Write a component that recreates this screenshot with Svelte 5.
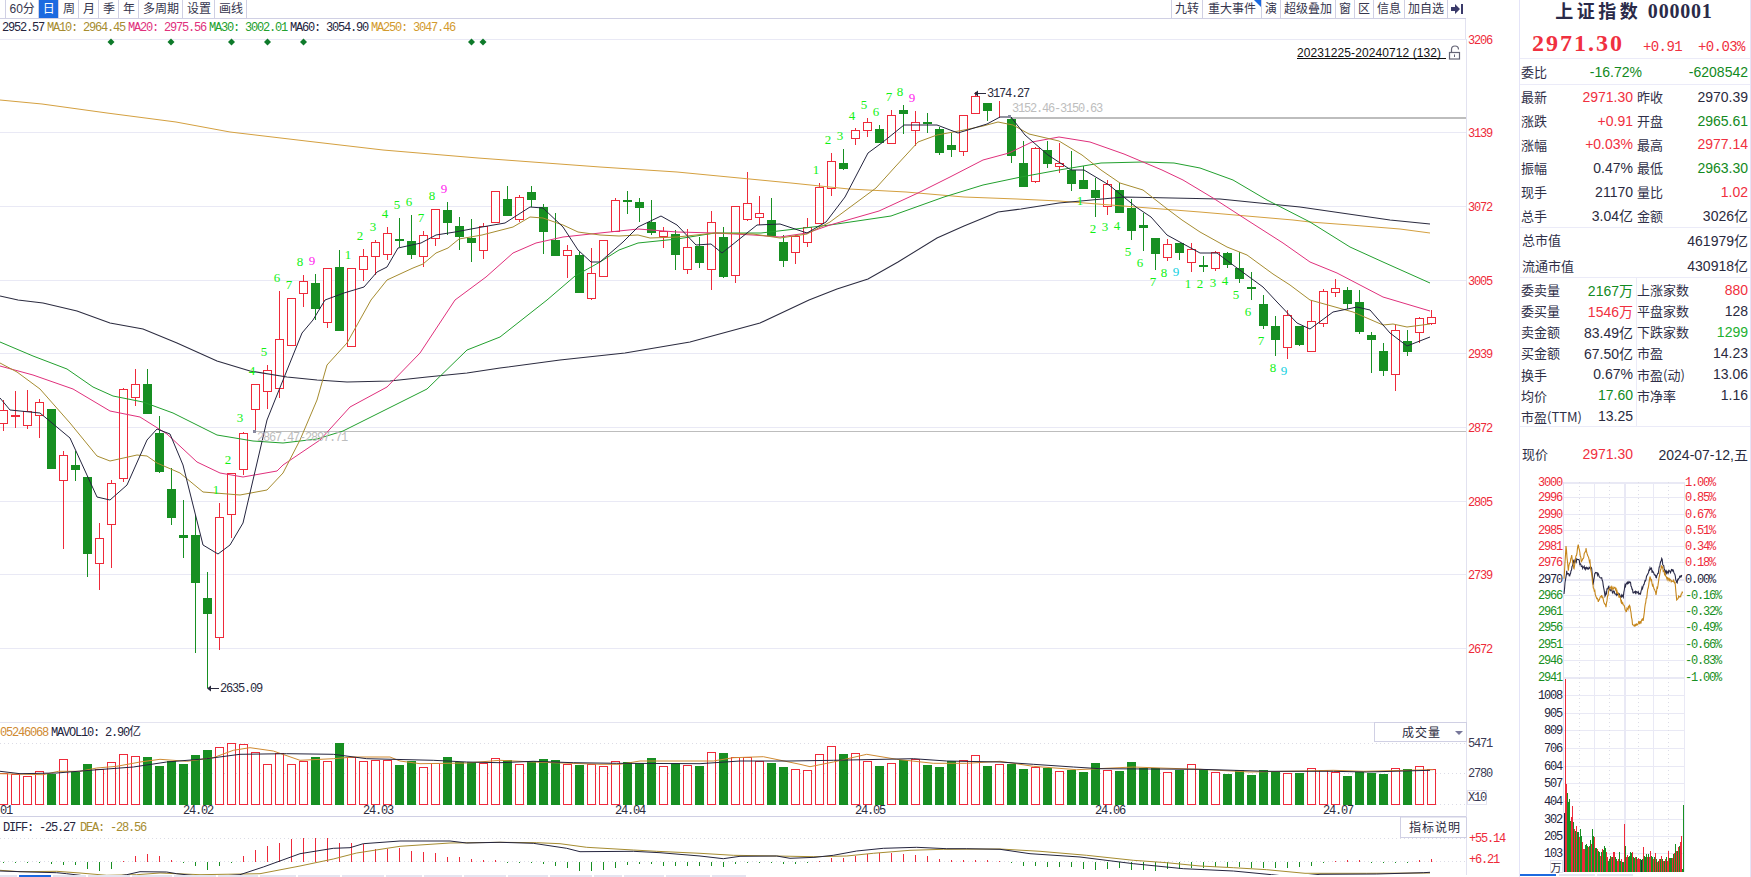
<script>
  const RED = '#ee2a3a', GREEN = '#178f22';
  const candles = [
    ['r',400,410,423,431],['r',391,415,416,428],['r',390,411,425,429],['r',399,402,415,438],['g',409,409,469,469],
    ['r',451,455,480,549],['g',451,465,470,481],['g',476,477,554,577],['r',523,538,563,590],['r',480,483,524,568],
    ['r',388,389,478,482],['r',369,384,397,406],['g',369,384,414,414],['g',416,433,472,473],['g',468,489,518,525],
    ['g',500,535,538,558],['g',515,535,583,653],['g',572,598,614,688],['r',503,517,637,650],['r',473,473,514,538],
    ['r',432,433,469,475],['r',384,384,409,431],['r',365,370,391,409],['r',291,339,388,398],['r',298,298,345,345],
    ['r',275,281,293,307],['g',274,283,309,320],['r',268,268,322,328],['g',250,267,331,331],['r',268,268,346,346],
    ['r',249,256,269,281],['r',240,242,256,275],['r',227,233,254,260],['g',218,239,241,247],['g',215,241,255,259],
    ['r',231,235,256,267],['r',209,209,238,246],['g',202,210,223,235],['g',217,226,237,250],['g',219,238,243,262],
    ['r',223,226,250,259],['r',191,191,222,223],['g',186,199,216,216],['r',195,197,219,222],['g',186,192,200,207],
    ['g',204,207,232,254],['g',213,240,256,256],['r',245,250,255,278],['g',252,255,293,293],['r',248,273,298,300],
    ['r',240,240,276,276],['r',198,200,231,231],['g',191,200,202,214],['g',198,202,208,222],['g',200,222,233,235],
    ['r',227,231,236,248],['g',230,234,255,270],['r',229,247,269,274],['g',237,246,263,268],['r',211,222,269,290],
    ['g',227,237,277,278],['r',206,206,275,283],['r',172,203,219,221],['r',196,213,217,225],['g',198,220,236,236],
    ['g',235,242,261,267],['r',235,236,252,264],['r',218,227,242,247],['r',183,187,223,223],['r',153,161,188,196],
    ['g',149,163,169,170],['r',128,130,138,145],['r',118,122,130,137],['g',125,129,143,143],['r',110,115,143,143],
    ['g',105,110,114,134],['r',111,122,130,146],['g',113,122,124,133],['g',127,129,153,155],['g',133,145,150,157],
    ['r',115,115,151,156],['r',92,96,113,113],['g',103,103,111,121],['r',101,111,111,118],['g',117,119,156,163],
    ['g',141,163,187,187],['r',147,148,181,183],['g',141,150,164,168],['r',143,163,166,173],['g',151,170,184,191],
    ['g',166,180,189,189],['g',178,190,198,217],['r',180,184,206,215],['g',183,190,213,213],['g',199,208,231,240],
    ['g',213,225,228,251],['g',238,238,254,270],['r',239,244,257,261],['g',243,243,253,260],['r',243,249,262,272],
    ['g',256,265,267,272],['r',251,252,268,271],['g',252,253,265,268],['g',252,268,279,283],['g',272,287,288,300],
    ['g',295,304,326,329],['g',316,326,340,356],['r',310,315,347,359],['g',326,326,345,346],['r',300,321,351,351],
    ['r',289,291,323,327],['r',279,288,292,297],['g',287,290,304,309],['g',290,302,332,334],['g',332,335,340,373],
    ['g',343,351,371,376],['r',325,330,374,391],['g',330,341,352,356],['r',317,318,332,343],['r',310,317,323,325]
  ].map((c, i) => ({ x: 3 + 12 * i, color: c[0], hi: c[1], top: c[2], bot: c[3], lo: c[4] }));

  const pts = (a) => a.map((p) => p.join(',')).join(' ');
  const conv = (ox, base, a, sx = 3) => a.map(([x, y]) => [+(ox + x / sx).toFixed(1), +(base + y / 3).toFixed(1)]);

  const ma250 = [[0,100],[42,104],[107,113],[176,122],[230,132],[306,141],[383,150],[478,158],[600,167],[677,172],[791,183],[849,189],[906,192],[964,197],[1017,199],[1059,201],[1136,207],[1200,212],[1293,220],[1310,222],[1350,225],[1400,229],[1430,233]];
  const ma60 = [[0,296],[18,300],[43,303],[77,311],[110,323],[143,329],[177,343],[217,361],[250,371],[287,377],[317,380],[347,382],[390,381],[427,377],[467,373],[500,368],[560,360],[625,353],[690,342],[760,323],[809,300],[837,289],[868,279],[898,262],[937,238],[964,226],[998,212],[1021,209],[1059,203],[1124,197],[1220,199],[1300,207],[1390,220],[1430,224]];
  const ma30 = [[0,342],[33,356],[67,369],[93,387],[113,396],[143,402],[173,413],[197,425],[217,435],[253,441],[283,443],[317,439],[343,431],[393,406],[427,389],[467,350],[500,337],[547,300],[575,276],[600,262],[619,250],[638,243],[677,239],[715,233],[761,233],[830,225],[891,216],[944,197],[983,185],[1021,177],[1059,170],[1101,163],[1143,162],[1174,163],[1200,168],[1233,180],[1267,200],[1310,222],[1350,247],[1383,262],[1430,283]];
  const ma20 = [[0,366],[33,375],[73,389],[110,411],[140,417],[167,434],[197,462],[220,473],[243,477],[277,471],[283,465],[320,440],[350,407],[387,387],[420,353],[455,300],[486,277],[513,253],[536,243],[563,237],[600,233],[638,229],[677,232],[715,233],[753,235],[780,237],[807,233],[830,225],[879,211],[918,193],[950,177],[983,160],[1009,153],[1032,142],[1059,137],[1090,142],[1124,154],[1162,170],[1183,180],[1213,198],[1247,220],[1283,243],[1310,262],[1337,273],[1383,297],[1430,311]];
  const ma10 = [[0,363],[17,372],[40,389],[70,423],[97,456],[110,461],[137,455],[147,456],[157,463],[180,473],[203,492],[240,495],[267,490],[283,473],[300,440],[317,400],[327,365],[347,343],[371,300],[387,280],[413,268],[423,264],[436,253],[448,248],[459,239],[482,235],[513,227],[530,217],[543,218],[563,225],[578,232],[600,235],[619,236],[638,235],[650,238],[677,237],[715,233],[753,234],[780,238],[807,234],[830,222],[876,188],[895,167],[918,142],[937,135],[964,130],[983,126],[998,122],[1013,125],[1029,134],[1059,141],[1082,155],[1101,170],[1120,183],[1143,190],[1166,208],[1182,220],[1200,232],[1227,247],[1247,255],[1273,274],[1290,285],[1310,300],[1353,312],[1383,325],[1393,324],[1407,327],[1430,324]];
  const ma5 = [[0,398],[10,410],[40,413],[70,438],[97,497],[110,500],[127,485],[147,440],[157,429],[170,434],[183,465],[203,545],[218,554],[230,545],[243,523],[267,420],[277,395],[302,333],[313,320],[325,300],[344,293],[364,287],[377,272],[387,267],[398,248],[421,243],[436,235],[455,232],[482,227],[505,223],[530,207],[543,208],[563,227],[578,250],[591,262],[600,262],[623,242],[638,227],[661,216],[677,225],[696,245],[711,244],[722,253],[757,225],[780,224],[807,233],[826,222],[845,197],[868,153],[883,142],[904,125],[937,125],[958,133],[987,124],[1000,117],[1011,117],[1025,135],[1048,155],[1071,170],[1084,170],[1109,185],[1136,207],[1151,217],[1167,235],[1200,253],[1217,253],[1237,268],[1263,287],[1277,302],[1297,323],[1310,329],[1333,312],[1357,307],[1370,310],[1390,333],[1407,346],[1430,337]];
  const maLines = [
    { d: ma250, c: '#d4a040', w: 1 }, { d: ma60, c: '#2c2c40', w: 1.05 }, { d: ma30, c: '#22a02e', w: 1 },
    { d: ma20, c: '#e0307c', w: 1 }, { d: ma10, c: '#a68c30', w: 1 }, { d: ma5, c: '#24243e', w: 1 }
  ];

  const grid = [39, 132, 206, 280, 353, 427, 501, 574, 648];
  const axis = ['3206', '3139', '3072', '3005', '2939', '2872', '2805', '2739', '2672'];
  const diamonds = [111, 171, 231.5, 267.5, 303.5, 471.5, 483];
  const seqM = '#ff22ee', seqC = '#10d0e0', seqG = '#10f014';
  const seq = [
    [216,490,'1'],[228,460,'2'],[240,418,'3'],[252,371,'4'],[264,352,'5'],[277,278,'6'],[289,285,'7'],[300,262,'8'],[312,261,'9',seqM],
    [348,255,'1'],[360,236,'2'],[373,227,'3'],[385,214,'4'],[397,205,'5'],[409,202,'6'],[421,218,'7'],[432,196,'8'],[444,189,'9',seqM],
    [816,170,'1'],[828,140,'2'],[840,136,'3'],[852,116,'4'],[864,105,'5'],[876,112,'6'],[889,97,'7'],[900,92,'8'],[912,98,'9',seqM],
    [1080,201,'1'],[1093,229,'2'],[1105,227,'3'],[1117,226,'4'],[1128,252,'5'],[1140,263,'6'],[1153,282,'7'],[1164,273,'8'],[1176,272,'9',seqC],
    [1188,284,'1'],[1200,284,'2'],[1213,283,'3'],[1225,281,'4'],[1236,295,'5'],[1248,312,'6'],[1261,341,'7'],[1273,368,'8'],[1284,371,'9',seqC]
  ];

  const volZ = [168,172,177,163,172,127,165,141,155,136,112,118,120,147,132,141,114,99,91,79,82,106,142,108,142,132,120,132,78,120,132,129,129,144,132,151,139,120,135,135,138,124];
  const volY = [760,764,761,759,760,764,765,764,766,761,762,763,758,766,763,765,766,752,753,757,757,761,763,767,769,770,754,746,754,753,761,766,763,760,759,765,767,761,760,755,766,764,764,769,767,768,771,770,772,763,770,771,762,768,768,772,770,764,769,772,774,770,775,770,772,773,773,768,770,772,776,772,773,774,768,769,766,769];
  const vols = [...volZ.map((z) => Math.round(717 + z / 3)), ...volY];
  const volBars = candles.map((c, i) => ({ x: c.x, color: c.color, top: vols[i] }));
  const volOrange = [
    ...conv(0, 717, [[0,170],[130,173],[175,163],[240,163],[290,153],[350,148],[420,135],[480,127],[560,133],[640,122],[700,100],[750,92],[820,102],[900,130],[1000,125],[1060,120],[1170,120],[1200,132],[1260,140],[1400,138]]),
    ...conv(500, 716, [[0,133],[100,138],[300,145],[360,145],[420,135],[640,135],[700,125],[790,122],[900,145],[930,152],[1000,138],[1100,115],[1190,130],[1300,142],[1400,142]]),
    ...conv(1000, 717, [[0,133],[100,148],[230,158],[400,150],[480,153],[600,157],[750,165],[1000,160],[1090,163],[1300,158]])
  ];
  const volDark = [
    ...conv(0, 717, [[0,163],[60,170],[170,168],[270,160],[400,150],[500,135],[620,125],[720,112],[860,110],[1000,112],[1100,125],[1300,130],[1400,135]]),
    ...conv(500, 716, [[0,140],[100,136],[220,140],[350,142],[600,143],[720,135],[870,135],[1000,133],[1240,128],[1340,135]]),
    ...conv(1000, 717, [[0,135],[100,142],[220,150],[300,155],[600,157],[800,163],[1000,163],[1100,165],[1290,160]])
  ];
  const dates = [[0,'01'],[183,'24.02'],[363,'24.03'],[615,'24.04'],[855,'24.05'],[1095,'24.06'],[1323,'24.07']];

  const hist = [-1,-1,-1,-1,-2,-3,-3,-7,-9,-7,1,6,8,6,2,-1,-4,-8,-4,-1,6,12,16,19,23,24,24,24,19,19,18,13,13,14,11,10,9,5,5,3,2,2,-1,-1,-1,-2,-4,-6,-9,-9,-8,-6,-3,-2,-2,-4,-4,-4,-4,-4,-5,-2,-1,-1,-1,-2,-2,-1,1,4,4,6,8,9,9,8,7,6,3,2,2,2,2,1,-1,-4,-4,-5,-5,-5,-7,-8,-7,-6,-8,-8,-9,-7,-7,-6,-6,-5,-5,-5,-6,-6,-6,-6,-5,-4,-1,1,2,2,-1,-1,-1,-1,2,3];
  const diff = [
    ...conv(0, 717, [[0,462],[90,465],[170,467],[200,470],[240,475],[300,485],[380,473],[420,464],[500,465],[530,470],[620,480],[720,473],[790,450],[900,410],[1000,394],[1050,392],[1090,380],[1200,372],[1350,372],[1400,378]]),
    ...conv(500, 716, [[0,379],[100,382],[200,397],[240,407],[400,406],[480,410],[600,420],[670,428],[720,421],[830,420],[870,427],[945,424],[1000,418],[1070,405],[1150,397],[1250,394],[1340,398],[1400,398]]),
    ...conv(1000, 717, [[0,397],[90,410],[240,420],[400,440],[550,455],[700,462],[815,473],[880,480],[960,472],[1130,471],[1270,467],[1290,466]])
  ];
  const dea = [
    ...conv(0, 717, [[0,460],[60,464],[170,463],[240,468],[320,475],[410,473],[480,468],[600,473],[780,470],[900,447],[1000,426],[1070,408],[1200,388],[1350,378]]),
    ...conv(500, 716, [[0,379],[110,380],[180,383],[260,394],[400,402],[470,406],[600,412],[700,418],[830,420],[940,422],[1040,420],[1120,412],[1230,403],[1330,400]]),
    ...conv(1000, 717, [[0,396],[120,403],[260,415],[400,430],[500,437],[600,447],[700,452],[800,458],[915,469],[1100,469],[1290,468]])
  ];
  const tabs = [[0,17,0],[19,51,1],[53,86,0],[88,130,0],[132,172,0],[174,216,0],[218,258,0],[260,296,0],[298,340,0],[342,384,0],[386,422,0],[424,462,0],[464,506,0],[508,548,0],[550,592,0],[594,622,0],[624,664,0],[666,710,0],[712,746,0]];

  // mini chart
  function jag(raw, seed) {
    const p = conv(1500, 470, raw);
    let s = seed, out = [];
    for (let k = 0; k < p.length - 1; k++) {
      const [x0, y0] = p[k], [x1, y1] = p[k + 1];
      for (let x = x0; x < x1; x += 0.5) {
        s = (s * 9301 + 49297) % 233280;
        const n = (s / 233280 - 0.5) * 3.4;
        out.push([+x.toFixed(1), +(y0 + (y1 - y0) * (x - x0) / (x1 - x0) + n).toFixed(1)]);
      }
    }
    out.push(p[p.length - 1]);
    return pts(out);
  }
  const miniDark = jag([[192,375],[195,345],[200,310],[210,320],[220,280],[235,270],[245,295],[275,300],[280,345],[285,310],[305,325],[315,380],[325,355],[340,370],[370,385],[375,350],[390,340],[400,370],[420,375],[435,335],[450,295],[470,325],[485,270],[495,310],[520,305],[530,340],[545,318]], 7);
  const miniOrange = jag([[192,330],[198,235],[205,300],[215,260],[222,300],[235,225],[245,280],[258,240],[270,280],[280,355],[295,400],[305,380],[318,410],[327,360],[345,355],[365,400],[378,425],[390,410],[398,470],[420,460],[430,450],[437,400],[450,325],[468,375],[485,290],[500,330],[525,340],[530,390],[548,372]], 31);
  const priceRows = [
    [483,'3000','1.00%','r',1],[498,'2996','0.85%','r'],[515,'2990','0.67%','r'],[531,'2985','0.51%','r'],[547,'2981','0.34%','r'],[563,'2976','0.18%','r'],
    [580,'2970','0.00%','d',1],[596,'2966','-0.16%','g'],[612,'2961','-0.32%','g'],[628,'2956','-0.49%','g'],[645,'2951','-0.66%','g'],[661,'2946','-0.83%','g'],[678,'2941','-1.00%','g',1]
  ];
  const miniVolRows = [[696,'1008'],[714,'905'],[731,'809'],[749,'706'],[767,'604'],[784,'507'],[802,'404'],[820,'302'],[837,'205'],[854,'103']];
  const mv = 'd402 r0 r315 g342 g370 g360 g425 r415 r380 g430 r450 g455 r442 g458 g458 r475 g450 g470 r490 r510 r510 g498 g495 g500 r505 g500 g483 r495 g450 g470 r473 g507 g507 r510 g515 g520 r530 g520 r510 g513 g500 g507 r520 r533 g545 g540 g530 r535 g535 r520 r520 g535 g540 r545 r540 g520 g545 r540 g548 g548 r435 g500 r533 r527 g533 g530 g520 g522 r520 g535 g538 r535 g533 r540 r537 r540 g540 d542 g540 r505 g530 g535 g525 r535 g525 r535 r515 g530 g535 r540 g535 r523 g540 r550 g545 r540 g540 r530 g540 r545 g545 r540 g535 r545 r515 g537 g537 g537 r537 g525 r522 g495 r515 g515 r505 g500 r490 r470 g570 g378'
    .split(' ').map((t, i) => ({ x: 1564 + i, c: t[0], top: 680 + (+t.slice(1)) / 3 }));
  const mvColor = { r: '#ee2a3a', g: '#178f22', d: '#24243e' };

  const left = [['60分'], ['日', 'on'], ['周'], ['月'], ['季'], ['年'], ['多周期'], ['设置'], ['画线']];
  const right = [['九转'], ['重大事件', 'flag'], ['演'], ['超级叠加'], ['窗'], ['区'], ['信息'], ['加自选']];
  const quote = [
    ['最新','2971.30','up','昨收','2970.39',''],['涨跌','+0.91','up','开盘','2965.61','dn'],['涨幅','+0.03%','up','最高','2977.14','up'],
    ['振幅','0.47%','','最低','2963.30','dn'],['现手','21170','','量比','1.02','up'],['总手','3.04亿','','金额','3026亿','']
  ];
  const stats = [
    ['委卖量','2167万','dn','上涨家数','880','up'],['委买量','1546万','up','平盘家数','128',''],['卖金额','83.49亿','','下跌家数','1299','lt'],
    ['买金额','67.50亿','','市盈','14.23',''],['换手','0.67%','','市盈(动)','13.06',''],['均价','17.60','dn','市净率','1.16',''],['市盈(TTM)','13.25','','','','']
  ];
</script>

<div class="root">
  <div class="main">
    <div class="toolbar">
      <span class="stub"></span>
      {#each left as [t, cls]}<span class="btn {cls ?? ''}">{t}</span>{/each}
      <span class="grow"></span>
      <span class="rgroup">
        {#each right as [t, cls]}<span class="btn {cls ?? ''}">{t}</span>{/each}
        <span class="btn arrow"><svg width="12" height="10" viewBox="0 0 12 10"><path d="M0 3h4V0l5 5-5 5V7H0z" fill="#3a3a6a"/><rect x="10" y="0" width="2" height="10" fill="#3a3a6a"/></svg></span>
      </span>
    </div>
    <div class="ma-row">
      <span class="c-dark">2952.57</span>
      <span class="c-tan">MA10: 2964.45</span>
      <span class="c-pink">MA20: 2975.56</span>
      <span class="c-grn">MA30: 3002.01</span>
      <span class="c-dark">MA60: 3054.90</span>
      <span class="c-org">MA250: 3047.46</span>
    </div>

    <svg class="chart" width="1519" height="683" viewBox="0 39 1519 683">
      <g shape-rendering="crispEdges">
        {#each grid as y}<line x1="0" x2="1466" y1={y + 0.5} y2={y + 0.5} stroke="#e9e9f5" />{/each}
        <line x1="1466.5" x2="1466.5" y1="39" y2="722" stroke="#e2e2f0" />
        <line x1="1010" x2="1466" y1="118" y2="118" stroke="#bdbdbd" stroke-width="2" />
        <line x1="254" x2="1466" y1="431.5" y2="431.5" stroke="#bdbdbd" />
      </g>
      {#each diamonds as x}<polygon points="{x},38.5 {x + 3.5},42 {x},45.5 {x - 3.5},42" fill="#0e7a2a" />{/each}

      <g shape-rendering="crispEdges">
        {#each candles as c}
          <line x1={c.x + 0.5} x2={c.x + 0.5} y1={c.hi} y2={c.lo} stroke={c.color === 'r' ? RED : GREEN} />
          {#if c.color === 'g'}
            <rect x={c.x - 4} y={c.top} width="9" height={Math.max(c.bot - c.top, 2)} fill={GREEN} />
          {:else}
            <rect x={c.x - 3.5} y={c.top + 0.5} width="8" height={Math.max(c.bot - c.top, 0)} fill="#fff" stroke={RED} />
          {/if}
        {/each}
      </g>
      {#each maLines as l}<polyline points={pts(l.d)} fill="none" stroke={l.c} stroke-width={l.w} />{/each}

      {#each seq as s}<text class="td" x={s[0]} y={s[1] + 4} fill={s[3] ?? seqG}>{s[2]}</text>{/each}

      <text class="mono" x="987" y="97" fill="#2a2a3e">3174.27</text>
      <line x1="978" x2="986" y1="93.5" y2="93.5" stroke="#2a2a3e" />
      <polygon points="974,93.5 978,90.5 978,96.5" fill="#2a2a3e" />
      <text class="mono" x="1012" y="112" fill="#bdbdbd">3152.46-3150.63</text>
      <rect x="1008" y="115" width="3" height="3" fill="#8a8aa0" />
      <text class="mono" x="257" y="441" fill="#bdbdbd">2867.47-2897.71</text>
      <rect x="253" y="430" width="3" height="3" fill="#8a8aa0" />
      <text class="mono" x="220" y="692" fill="#2a2a3e">2635.09</text>
      <line x1="211" x2="219" y1="688.5" y2="688.5" stroke="#2a2a3e" />
      <polygon points="207,688.5 211,685.5 211,691.5" fill="#2a2a3e" />

      <text class="range" x="1297" y="57">20231225-20240712 (132)</text>
      <line x1="1297" x2="1446" y1="58.5" y2="58.5" stroke="#111" />
      <path d="M1451.5 52v-2.5a3.5 3.5 0 0 1 7 0" fill="none" stroke="#667" stroke-width="1.2" />
      <rect x="1449.5" y="52.5" width="10" height="6.5" fill="none" stroke="#667" stroke-width="1.2" />
      <rect x="1454" y="54.5" width="1" height="2.5" fill="#667" />

      {#each axis as a, i}<text class="mono" x="1468" y={grid[i] + 4.5} fill={RED}>{a}</text>{/each}
    </svg>

    <svg class="chart" width="1519" height="95" viewBox="0 722 1519 95">
      <g shape-rendering="crispEdges">
        <line x1="0" x2="1466" y1="722.5" y2="722.5" stroke="#e4e4f0" />
        <line x1="1466.5" x2="1466.5" y1="722" y2="817" stroke="#e2e2f0" />
        <line class="dots" x1="0" x2="1466" y1="743.5" y2="743.5" />
        <line class="dots" x1="0" x2="1466" y1="773.5" y2="773.5" />
        <line class="dots" x1="0" x2="1466" y1="804.5" y2="804.5" />
        <line x1="0" x2="1466" y1="816.5" y2="816.5" stroke="#d0d0e4" />
        {#each volBars as v}
          {#if v.color === 'g'}
            <rect x={v.x - 4} y={v.top} width="9" height={804.5 - v.top} fill={GREEN} />
          {:else}
            <rect x={v.x - 3.5} y={v.top + 0.5} width="8" height={804 - v.top} fill="#fff" stroke={RED} />
          {/if}
        {/each}
      </g>
      <polyline points={pts(volOrange)} fill="none" stroke="#cf8a32" stroke-width="1" />
      <polyline points={pts(volDark)} fill="none" stroke="#24243e" stroke-width="1" />

      <text class="mono" x="0" y="736" fill="#cf8a32">05246068</text>
      <text class="mono" x="51" y="736" fill="#24243e">MAVOL10: 2.90<tspan class="cjk">亿</tspan></text>
      {#each dates as d}<text class="mono" x={d[0]} y="814" fill="#2a2a3e">{d[1]}</text>{/each}

      <rect class="box" x="1374.5" y="722.5" width="92" height="19" />
      <text class="cjk13" x="1402" y="737">成交量</text>
      <polygon points="1455,731 1463,731 1459,735" fill="#77779a" />
      <text class="mono" x="1468" y="747" fill="#3a3a55">5471</text>
      <text class="mono" x="1468" y="777" fill="#3a3a55">2780</text>
      <rect x="1467.5" y="790.5" width="19" height="14" fill="none" stroke="#e4e4f0" />
      <text class="mono" x="1468" y="801" fill="#3a3a55">X10</text>
    </svg>

    <svg class="chart macd" width="1519" height="58" viewBox="0 817 1519 58">
      <line x1="1466.5" x2="1466.5" y1="817" y2="875" stroke="#e2e2f0" shape-rendering="crispEdges" />
      <line class="dots" x1="0" x2="1466" y1="838.5" y2="838.5" shape-rendering="crispEdges" />
      <line class="dots" x1="0" x2="1466" y1="861.5" y2="861.5" shape-rendering="crispEdges" />
      <g shape-rendering="crispEdges">
        {#each hist as h, i}
          <line x1={3.5 + 12 * i} x2={3.5 + 12 * i} y1={862} y2={862 - h} stroke={h > 0 ? RED : GREEN} />
        {/each}
      </g>
      <polyline points={pts(dea)} fill="none" stroke="#a68c30" stroke-width="1" />
      <polyline points={pts(diff)} fill="none" stroke="#24243e" stroke-width="1" />
      <text class="mono" x="3" y="831" fill="#24243e">DIFF: -25.27</text>
      <text class="mono" x="80" y="831" fill="#a68c30">DEA: -28.56</text>
      <rect class="box" x="1400.5" y="817" width="66" height="20.5" />
      <text class="cjk13" x="1409" y="832">指标说明</text>
      <text class="mono" x="1469" y="842" fill={RED}>+55.14</text>
      <text class="mono" x="1469" y="863" fill={RED}>+6.21</text>
    </svg>

    <div class="tabs">
      {#each tabs as t}<span class="tab" class:on={t[2]} style="left:{t[0]}px;width:{t[1] - t[0]}px"></span>{/each}
    </div>
  </div>

  <aside class="panel">
    <header class="head">
      <div class="title"><span class="tc">上证指数</span> <span class="tn">000001</span></div>
      <div class="price">
        <span class="big">2971.30</span>
        <span class="chg">+0.91</span>
        <span class="chg">+0.03%</span>
      </div>
    </header>

    <section class="sec weibi">
      <div class="w-row"><span class="lab">委比</span><span class="val dn">-16.72%</span><span class="val dn wide">-6208542</span></div>
    </section>

    <section class="sec quote">
      {#each quote as r}
        <div class="row"><span class="lab">{r[0]}</span><span class="val {r[2]}">{r[1]}</span><span class="lab l2">{r[3]}</span><span class="val {r[5]}">{r[4]}</span></div>
      {/each}
    </section>

    <section class="sec cap">
      <div class="cap-row"><span class="lab">总市值</span><span class="val">461979亿</span></div>
      <div class="cap-row"><span class="lab">流通市值</span><span class="val">430918亿</span></div>
    </section>

    <section class="sec stats">
      {#each stats as r}
        <div class="row"><span class="lab">{r[0]}</span><span class="val {r[2]}">{r[1]}</span><span class="lab l2">{r[3]}</span><span class="val {r[5]}">{r[4]}</span></div>
      {/each}
    </section>

    <section class="now">
      <span class="lab">现价</span><span class="val up nowp">2971.30</span><span class="val date">2024-07-12,五</span>
    </section>

    <svg class="chart" width="230" height="405" viewBox="1520 470 230 405">
      <g shape-rendering="crispEdges">
        {#each priceRows as r}
          <line x1="1563" x2="1684" y1={r[0] + 0.5} y2={r[0] + 0.5} stroke="#e9e9f5" stroke-width={r[4] ? 2 : 1} />
        {/each}
        {#each miniVolRows as r}
          <line x1="1563" x2="1684" y1={r[0] + 0.5} y2={r[0] + 0.5} stroke="#e9e9f5" />
        {/each}
        <line x1="1563.5" x2="1563.5" y1="483" y2="873" stroke="#e2e2f0" />
        <line x1="1594.5" x2="1594.5" y1="483" y2="873" stroke="#e9e9f5" />
        <line x1="1625" x2="1625" y1="483" y2="873" stroke="#e9e9f5" stroke-width="2" />
        <line x1="1653.5" x2="1653.5" y1="483" y2="873" stroke="#e9e9f5" />
        <line x1="1684.5" x2="1684.5" y1="483" y2="873" stroke="#e9e9f5" />
        {#each [1579.5, 1609.5, 1638.5, 1668.5] as x}
          <line class="dots" x1={x} x2={x} y1="483" y2="873" />
        {/each}
        {#each mv as b}
          <line x1={b.x + 0.5} x2={b.x + 0.5} y1={b.top} y2="873" stroke={mvColor[b.c]} />
        {/each}
      </g>
      <polyline points={miniDark} fill="none" stroke="#2a2a48" stroke-width="1.1" />
      <polyline points={miniOrange} fill="none" stroke="#c6861a" stroke-width="1.1" />
      {#each priceRows as r}
        <text class="mono end" x="1562" y={r[0] + 4} fill={r[3] === 'r' ? RED : r[3] === 'g' ? GREEN : '#24243e'}>{r[1]}</text>
        <text class="mono" x="1685" y={r[0] + 4} fill={r[3] === 'r' ? RED : r[3] === 'g' ? GREEN : '#24243e'}>{r[2]}</text>
      {/each}
      {#each miniVolRows as r}
        <text class="mono end" x="1562" y={r[0] + 4} fill="#24243e">{r[1]}</text>
      {/each}
      <rect x="1550" y="861" width="12" height="12" fill="#fff" stroke="#e4e4f0" shape-rendering="crispEdges" />
      <text class="wan" x="1550.5" y="872.5">万</text>
    </svg>

    <div class="tabs">
      <span class="tab on ptab1"></span><span class="tab ptab2"></span><span class="tab ptab3"></span>
    </div>
  </aside>
</div>

<style>
  :global(body) { margin: 0; background: #fff; overflow: hidden; }
  .root { display: flex; width: 1751px; height: 877px; overflow: hidden; font-family: "Liberation Sans", "Noto Sans CJK SC", sans-serif; color: #2a2a40; }
  .main { width: 1519px; flex: none; display: flex; flex-direction: column; }
  .toolbar { width: 1466px; height: 18px; display: flex; border-bottom: 1px solid #d0d0e4; font: 12px/18px "Liberation Sans", "Noto Sans CJK SC", sans-serif; color: #36364e; box-sizing: content-box; }
  .stub { width: 5px; border-right: 1px solid #d0d0e4; }
  .btn { padding: 0 3.5px; border-right: 1px solid #d0d0e4; white-space: nowrap; position: relative; }
  .btn.on { background: #1c6ae0; color: #fff; }
  .grow { flex: 1; }
  .rgroup { display: flex; border-left: 1px solid #d0d0e4; }
  .rgroup .btn { padding: 0 3px; }
  .rgroup .flag { padding: 0 5px; }
  .flag::after { content: ""; position: absolute; right: 0; top: 0; border-top: 7px solid #1c6ae0; border-left: 7px solid transparent; }
  .rgroup .arrow { display: flex; align-items: center; padding: 0 3px; border-right: none; }
  .ma-row { width: 1466px; height: 20px; flex: none; display: flex; gap: 3px; padding-left: 2px; box-sizing: border-box; border-right: 1px solid #e2e2f0; font: 12px/19px "Liberation Mono", monospace; letter-spacing: -1.2px; white-space: pre; }
  .c-dark { color: #24243e; } .c-tan { color: #a68c30; } .c-pink { color: #e0307c; } .c-grn { color: #22a02e; } .c-org { color: #d29a2e; }
  .chart { display: block; overflow: visible; flex: none; }
  .macd { overflow: hidden; }
  .mono { font: 12px "Liberation Mono", monospace; letter-spacing: -1.2px; }
  .end { text-anchor: end; }
  .cjk { font: 12px "Noto Sans CJK SC", sans-serif; }
  .cjk13 { font: 12px "Noto Sans CJK SC", sans-serif; fill: #2a2a40; letter-spacing: 1px; }
  .wan { font: 11px "Noto Sans CJK SC", sans-serif; fill: #2a2a40; }
  .td { font: 13px "Liberation Serif", serif; text-anchor: middle; }
  .range { font: 12px "Liberation Sans", sans-serif; fill: #111; letter-spacing: .09px; }
  .box { fill: #fff; stroke: #d0d0e4; }
  .dots { stroke: #dcdce6; stroke-dasharray: 1 3; }
  .tabs { position: relative; height: 2px; flex: none; }
  .tab { position: absolute; top: 0; height: 2px; background: #e4e4f0; }
  .tab.on { background: #1c6ae0; }
  .ptab1 { left: 0; width: 36px; }
  .ptab2 { left: 39px; width: 36px; }
  .ptab3 { left: 77px; width: 36px; }

  .panel { width: 232px; flex: none; box-sizing: border-box; border-left: 1px solid #e4e4f8; border-right: 1px solid #e4e4f8; display: flex; flex-direction: column; font-size: 14px; }
  .head { height: 58px; flex: none; box-sizing: border-box; }
  .title { height: 23px; line-height: 22px; text-align: center; white-space: nowrap; font-family: "Liberation Serif", "Noto Sans CJK SC", serif; font-weight: 700; color: #2a2a48; padding-right: 2px; }
  .tc { font-size: 18px; letter-spacing: 3.5px; }
  .tn { font-size: 20px; letter-spacing: 0.8px; margin-left: 3px; }
  .price { display: flex; align-items: baseline; height: 32px; margin-top: 3px; padding-left: 12px; color: #f03040; }
  .big { font: 700 24px/34px "Liberation Serif", serif; letter-spacing: 2px; width: 111px; flex: none; }
  .chg { font: 14px "Liberation Mono", monospace; letter-spacing: -0.6px; flex: none; }
  .chg + .chg { margin-left: 16px; }
  .sec { border-top: 1px solid #ebebf8; flex: none; box-sizing: border-box; }
  .weibi { height: 26px; }
  .w-row { display: flex; height: 25px; align-items: center; padding: 0 2px 0 1px; }
  .w-row .val:nth-child(2) { width: 95px; text-align: right; }
  .w-row .wide { flex: 1; }
  .quote { height: 143px; }
  .quote .row { height: 23.7px; }
  .stats { height: 150px; padding-top: 1px; background: linear-gradient(#ebebf8, #ebebf8) 116px 0/1px 100% no-repeat; border-bottom: 1px solid #ebebf8; }
  .stats .row { height: 21.14px; }
  .row { display: grid; grid-template-columns: 30px 82px 1fr auto; align-items: center; padding: 0 2px 0 1px; white-space: nowrap; }
  .cap { height: 50px; display: flex; flex-direction: column; gap: 2px; }
  .cap-row { display: flex; justify-content: space-between; height: 24px; align-items: center; padding: 0 2px; }
  .lab { font: 13px "Noto Sans CJK SC", "Liberation Sans", sans-serif; color: #2f2f48; white-space: nowrap; }
  .l2 { padding-left: 4px; }
  .val { text-align: right; color: #2a2a40; font-family: "Liberation Sans", "Noto Sans CJK SC", sans-serif; white-space: nowrap; }
  .up { color: #f03040; } .dn { color: #128a22; } .lt { color: #22b030; }
  .now { height: 42px; flex: none; box-sizing: border-box; padding: 11px 2px 0 2px; display: flex; align-items: center; }
  .nowp { width: 85px; }
  .date { flex: 1; }
</style>
